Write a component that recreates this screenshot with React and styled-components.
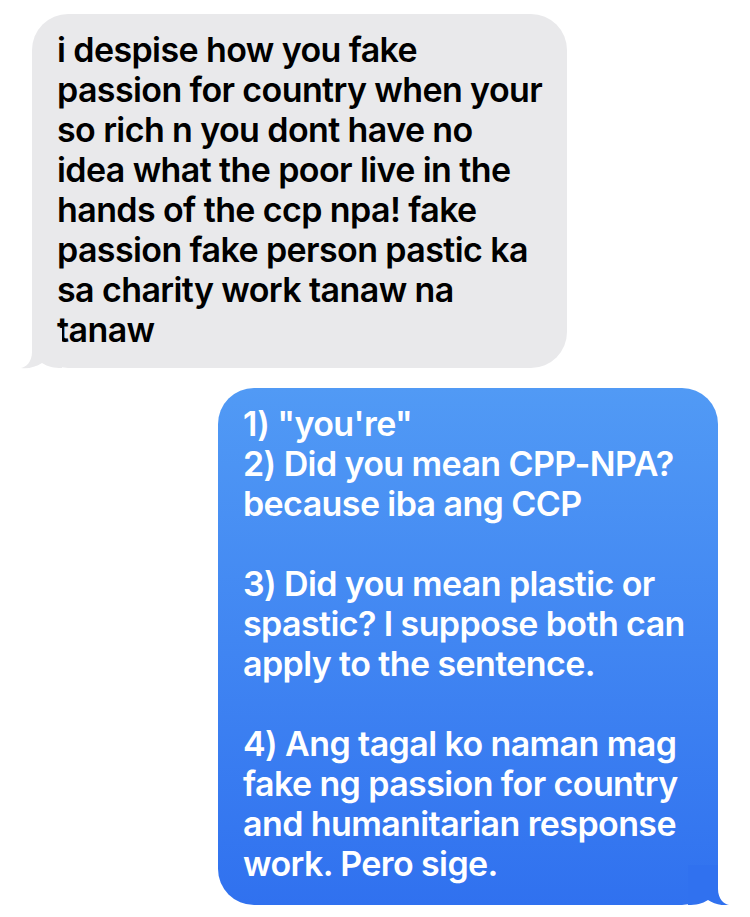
import React from "react";
import styled, { createGlobalStyle } from "styled-components";

const incoming = [
  "i despise how you fake",
  "passion for country when your",
  "so rich n you dont have no",
  "idea what the poor live in the",
  "hands of the ccp npa! fake",
  "passion fake person pastic ka",
  "sa charity work tanaw na",
  "tanaw",
];

const outgoing = [
  '1) "you\'re"',
  "2) Did you mean CPP-NPA?",
  "because iba ang CCP",
  "",
  "3) Did you mean plastic or",
  "spastic? I suppose both can",
  "apply to the sentence.",
  "",
  "4) Ang tagal ko naman mag",
  "fake ng passion for country",
  "and humanitarian response",
  "work. Pero sige.",
];

const App = () => {
  return (
    <>
      <GlobalStyle />
      <Thread>
        <Bubble $from="them">
          {incoming.map((line, i) => (
            <Line key={i}>{line || "\u00a0"}</Line>
          ))}
          <Tail $from="them" viewBox="0 0 44 42" width="44" height="42">
            <path d="M14 0 L14 24 C14 34 8 39 3 40 C10 41 18 39 24 35 C30 39 36 40 44 40 L44 0 Z" />
          </Tail>
        </Bubble>
        <Bubble $from="me">
          {outgoing.map((line, i) => (
            <Line key={i}>{line || "\u00a0"}</Line>
          ))}
          <Tail $from="me" viewBox="0 0 44 42" width="44" height="42">
            <path d="M30 0 L30 24 C30 34 36 39 41 40 C34 41 26 39 20 35 C14 39 8 40 0 40 L0 0 Z" />
          </Tail>
        </Bubble>
      </Thread>
    </>
  );
};

const GlobalStyle = createGlobalStyle`
  body {
    margin: 0;
    background: #ffffff;
    font-family: Inter, "Open Sans", "Liberation Sans", sans-serif;
  }
`;

const Thread = styled.div`
  display: flex;
  flex-direction: column;
  padding: 14px 32px 0 32px;
  gap: 20px;
`;

const Bubble = styled.div`
  position: relative;
  box-sizing: border-box;
  width: ${(p) => (p.$from === "me" ? "500px" : "535px")};
  align-self: ${(p) => (p.$from === "me" ? "flex-end" : "flex-start")};
  padding: ${(p) => (p.$from === "me" ? "16px 20px 21px 25px" : "16px 20px 18px 25px")};
  border-radius: 36px;
  background: ${(p) =>
    p.$from === "me"
      ? "linear-gradient(to bottom, #519af5, #3071ef)"
      : "#e9e9eb"};
  color: ${(p) => (p.$from === "me" ? "#ffffff" : "#000000")};
  font-size: 34px;
  font-weight: 590;
  line-height: 40px;
  letter-spacing: -0.6px;
`;

const Line = styled.div`
  white-space: nowrap;
`;

const Tail = styled.svg`
  position: absolute;
  bottom: 0;
  ${(p) => (p.$from === "me" ? "right: -14px;" : "left: -14px;")}
  fill: ${(p) => (p.$from === "me" ? "#3071ef" : "#e9e9eb")};
  transform: translateY(2px);
`;

export default App;
